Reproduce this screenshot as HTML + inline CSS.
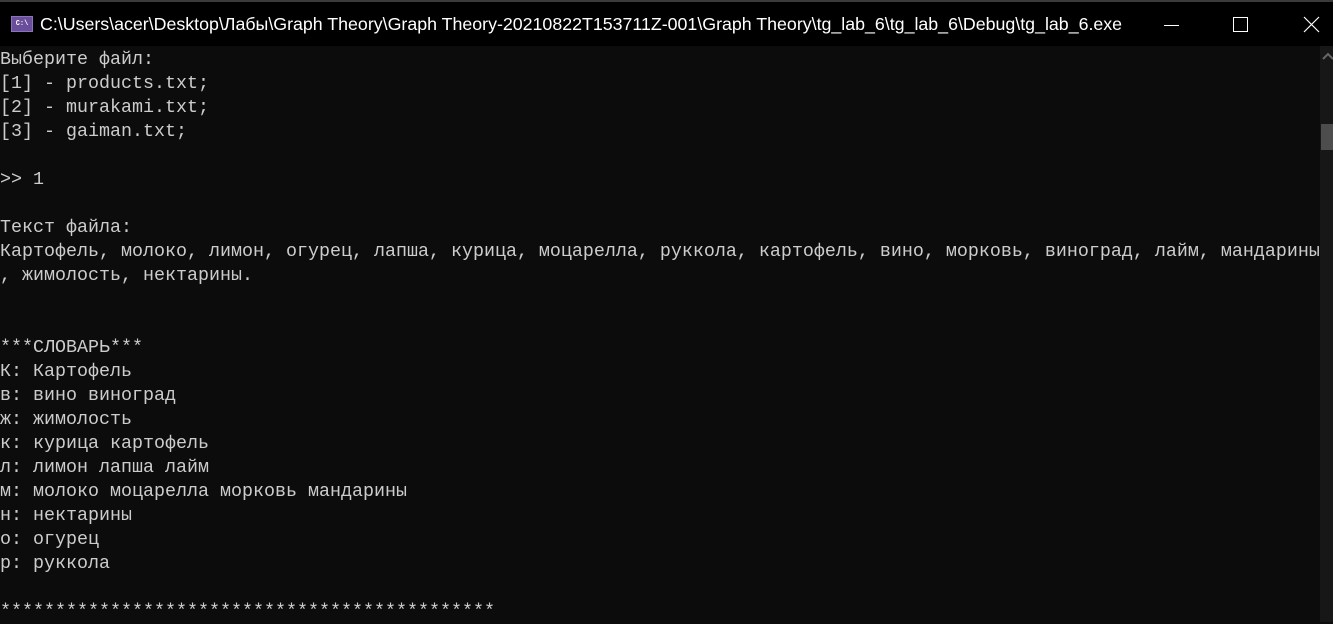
<!DOCTYPE html>
<html><head><meta charset="utf-8"><style>
html,body{margin:0;padding:0;width:1333px;height:622px;overflow:hidden;background:#0c0c0c;}
#tb{position:absolute;left:0;top:0;width:1333px;height:46px;background:#000;border-top:2px solid #3a3a3a;box-sizing:border-box;}
#title{position:absolute;left:40px;top:12px;color:#fff;font:17.8px "Liberation Sans","DejaVu Sans",sans-serif;white-space:nowrap;}
#icon{position:absolute;left:11px;top:14px;width:22px;height:16px;background:#6a4e9c;border:1px solid #8a75b8;box-sizing:border-box;color:#fff;font:bold 7px "Liberation Mono",monospace;line-height:14px;text-align:center;}
pre{position:absolute;left:0;top:48px;margin:0;color:#cccccc;font:18.33px/24px "Liberation Mono","DejaVu Sans Mono",monospace;white-space:pre;}
#sb{position:absolute;left:1320px;top:46px;width:13px;height:576px;background:#171717;}
#th{position:absolute;left:1321px;top:124px;width:12px;height:26px;background:#4d4d4d;}
</style></head><body>
<div id="tb">
<div id="icon">C:\</div>
<div id="title">C:\Users\acer\Desktop\Лабы\Graph Theory\Graph Theory-20210822T153711Z-001\Graph Theory\tg_lab_6\tg_lab_6\Debug\tg_lab_6.exe</div>
<svg style="position:absolute;left:1164px;top:15px" width="16" height="16"><line x1="0" y1="8.5" x2="15" y2="8.5" stroke="#fff" stroke-width="1"/></svg>
<svg style="position:absolute;left:1232px;top:14px" width="17" height="17"><rect x="1.5" y="1.5" width="14" height="14" fill="none" stroke="#fff" stroke-width="1"/></svg>
<svg style="position:absolute;left:1303px;top:14px" width="17" height="17"><path d="M1 1L16 16M16 1L1 16" stroke="#fff" stroke-width="1.2"/></svg>
</div>
<pre>Выберите файл:
[1] - products.txt;
[2] - murakami.txt;
[3] - gaiman.txt;

&gt;&gt; 1

Текст файла:
Картофель, молоко, лимон, огурец, лапша, курица, моцарелла, руккола, картофель, вино, морковь, виноград, лайм, мандарины
, жимолость, нектарины.


***СЛОВАРЬ***
К: Картофель
в: вино виноград
ж: жимолость
к: курица картофель
л: лимон лапша лайм
м: молоко моцарелла морковь мандарины
н: нектарины
о: огурец
р: руккола

*********************************************</pre>
<div id="sb"></div><div id="th"></div>
<svg style="position:absolute;left:1322px;top:50px" width="11" height="10"><path d="M1 9L6 4L11 9" fill="none" stroke="#666" stroke-width="2"/></svg>
</body></html>
